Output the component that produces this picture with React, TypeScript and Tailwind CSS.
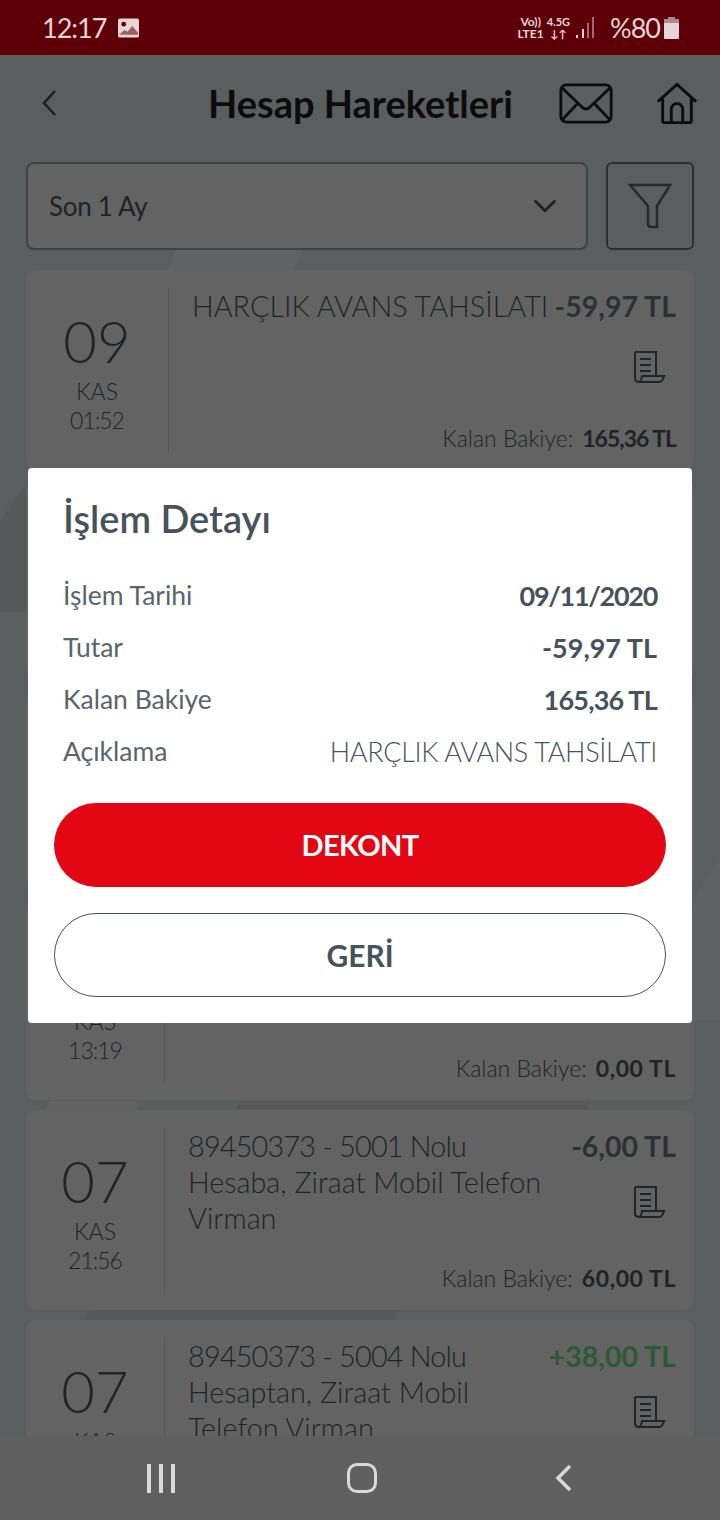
import { ChevronDown } from 'lucide-react';

const font = 'font-["Lato","Open_Sans",sans-serif]';

function ReceiptIcon() {
	return (
		<svg width="34" height="34" viewBox="0 0 34 34" fill="none" stroke="#1f2427" strokeWidth="2">
			<path d="M3 2h21v24" />
			<path d="M3 2v26c0 2.500 1.500 4 4 4h20c2.500 0 4-2 5-6H10c-.500 3-1 6-3 6" />
			<path d="M8 9h11M8 15h11M8 21h11" />
		</svg>
	);
}

type Row = {
	day: string;
	time: string;
	lines: string[];
	amount: string;
	balance: string;
	green?: boolean;
	wide?: boolean;
};

const rows: Row[] = [
	{ day: '09', time: '01:52', lines: ['HARÇLIK AVANS TAHSİLATI'], amount: '-59,97 TL', balance: '165,36 TL', wide: true },
	{ day: '08', time: '13:19', lines: [''], amount: '', balance: '0,00 TL' },
	{ day: '08', time: '13:19', lines: [''], amount: '', balance: '0,00 TL' },
	{ day: '08', time: '13:19', lines: [''], amount: '', balance: '0,00 TL' },
	{ day: '07', time: '21:56', lines: ['89450373 - 5001 Nolu', 'Hesaba, Ziraat Mobil Telefon', 'Virman'], amount: '-6,00 TL', balance: '60,00 TL' },
	{ day: '07', time: '21:56', lines: ['89450373 - 5004 Nolu', 'Hesaptan, Ziraat Mobil', 'Telefon Virman'], amount: '+38,00 TL', balance: '22,00 TL', green: true },
];

function Card({ row }: { row: Row }) {
	return (
		<div className="flex h-[200px] shrink-0 rounded-[10px] bg-[#636363] pl-[6px] pr-[18px] py-[18px]">
			<div
				className={`flex flex-col items-center justify-center border-r border-[#555758] pt-[6px] pr-[6px] text-[#1f2326] ${
					row.wide ? 'w-[137px]' : 'w-[133px]'
				}`}
			>
				<span className="text-[58px] leading-[60px] font-light">{row.day}</span>
				<span className="mt-[6px] text-[23px] leading-[29px] font-light">KAS</span>
				<span className="text-[23px] leading-[29px] font-light tracking-[-1px]">{row.time}</span>
			</div>
			<div className="flex min-w-0 flex-1 flex-col pl-[23px]">
				<div className="flex flex-1 justify-between">
					<div className="text-[28.800px] leading-[36px] font-light text-[#1f2326]">
						{row.lines.map((line, i) => (
							<div key={i} className={`whitespace-nowrap ${i === 0 && row.lines.length > 1 ? 'tracking-[-0.8px]' : ''}`}>
								{line}
							</div>
						))}
					</div>
					<div className="flex flex-col items-end">
						<span className={`text-[28.500px] leading-[36px] font-bold whitespace-nowrap ${row.green ? 'text-[#2b5a34]' : 'text-[#2c3134]'}`}>
							{row.amount}
						</span>
						<div className={`mr-[10px] ${row.wide ? 'mt-[26px]' : 'mt-[21px]'}`}>
							<ReceiptIcon />
						</div>
					</div>
				</div>
				<div className="flex justify-end gap-[9px] text-[23px] leading-[28px] text-[#1f2326]">
					<span className="font-light">Kalan Bakiye:</span>
					<span className={`font-bold ${row.wide ? 'tracking-[-1px]' : 'tracking-[0.6px]'}`}>{row.balance}</span>
				</div>
			</div>
		</div>
	);
}

function DetailRow({ label, value, valueClass }: { label: string; value: string; valueClass: string }) {
	return (
		<div className="flex h-[52px] items-center justify-between text-[27px] text-[#47535a]">
			<span className="text-[26.500px] font-normal text-[#5a656b]">{label}</span>
			<span className={valueClass}>{value}</span>
		</div>
	);
}

export default function App() {
	return (
		<div className={`relative isolate flex h-[1520px] w-[720px] flex-col overflow-hidden bg-[#5b5e5f] ${font}`}>
			{/* faint diagonal shapes of the page background */}
			<svg className="absolute top-0 left-0 -z-10" width="720" height="1520" viewBox="0 0 720 1520">
				<polygon points="176,250 302,250 294,270 168,270" fill="#606364" />
				<polygon points="0,520 28,482 28,612 0,612" fill="#565859" />
				<polygon points="720,860 692,900 692,1020 720,1020" fill="#5f6162" />
				<polygon points="50,1101 140,1101 135,1110 45,1110" fill="#606263" />
				<polygon points="240,1101 590,1101 586,1110 236,1110" fill="#565859" />
				<polygon points="90,1310 400,1310 394,1320 84,1320" fill="#565859" />
			</svg>

			<div className="flex h-[55px] shrink-0 items-center justify-between bg-[#5e0008] pr-[41px] pl-[42px] text-[#e6d5d6]">
				<div className="flex items-center gap-[12px]">
					<span className="text-[27px] leading-none tracking-[-1px]">12:17</span>
					<svg width="21" height="20" viewBox="0 0 22 20">
						<rect width="22" height="20" rx="2" fill="#e6d5d6" />
						<circle cx="6" cy="6" r="2.500" fill="#5e0008" />
						<path d="M1 17l6-5 3 2 5-6 6 7v2H1z" fill="#5e0008" opacity="0.55" />
					</svg>
				</div>
				<div className="flex items-center">
					<div className="flex flex-col text-[12px] leading-[12px] font-bold">
						<span className="pl-[3px]">Vo))</span>
						<span>LTE1</span>
					</div>
					<div className="ml-[3px] flex flex-col items-center text-[11px] leading-[12px] font-bold">
						<span>4.5G</span>
						<span>↓↑</span>
					</div>
					<svg className="ml-[5px]" width="20" height="22" viewBox="0 0 20 22">
						<rect x="1" y="18" width="2" height="3" fill="#e6d5d6" />
						<rect x="7" y="12" width="2" height="9" fill="#e6d5d6" />
						<rect x="12" y="6" width="2" height="15" fill="#a06a6e" />
						<rect x="17" y="0" width="2" height="21" fill="#a06a6e" />
					</svg>
					<span className="ml-[15px] text-[27px] leading-none tracking-[-1px]">%80</span>
					<svg className="ml-[4px]" width="15" height="22" viewBox="0 0 15 22">
						<rect x="4" y="0" width="7" height="3" fill="#a98b8d" />
						<rect x="0" y="2" width="15" height="5" fill="#a98b8d" />
						<rect x="0" y="6" width="15" height="16" rx="1" fill="#e6d5d6" />
					</svg>
				</div>
			</div>

			<div className="flex flex-1 flex-col overflow-hidden">
				<div className="flex h-[107px] shrink-0 items-center pb-[11px]">
					<svg className="ml-[41px]" width="16" height="28" viewBox="0 0 16 28" fill="none" stroke="#1b1e20" strokeWidth="2.500">
						<path d="M14 2L3 14l11 12" />
					</svg>
					<h1 className="ml-[151px] text-[38px] leading-none font-bold whitespace-nowrap text-[#0b0c0d]">Hesap Hareketleri</h1>
					<svg className="ml-[44px] shrink-0" width="58" height="41" viewBox="0 0 58 44" fill="none" stroke="#0b0c0d" strokeWidth="3">
						<rect x="2" y="2" width="54" height="40" rx="6" />
						<path d="M3 5l22 21c2.500 2.500 5.500 2.500 8 0L55 5M3 40l17-18M55 40L38 22" />
					</svg>
					<svg className="ml-[41px] shrink-0" width="42" height="43" viewBox="0 0 44 44" fill="none" stroke="#0b0c0d" strokeWidth="3">
						<path d="M2 20L22 2l20 18" />
						<path d="M7 16v24a2 2 0 0 0 2 2h26a2 2 0 0 0 2-2V16" />
						<path d="M16 42V28a6 6 0 0 1 12 0v14" />
					</svg>
				</div>

				<div className="flex shrink-0 gap-[18px] px-[26px]">
					<div className="flex h-[88px] w-[562px] items-center justify-between rounded-[8px] border-2 border-[#3f4244] bg-[#636363] pr-[22px] pl-[21px]">
						<span className="text-[26px] leading-none tracking-[-0.3px] text-[#1f2326]">Son 1 Ay</span>
						<ChevronDown size={38} strokeWidth={1.800} color="#1f2326" />
					</div>
					<div className="flex h-[88px] w-[88px] items-center justify-center rounded-[6px] border-2 border-[#2c3032]">
						<svg width="44" height="46" viewBox="0 0 44 46" fill="none" stroke="#25292c" strokeWidth="2.500">
							<path d="M2 2h40L29 23v21h-6c-2 0-3-1-3-3V23z" />
						</svg>
					</div>
				</div>

				<div className="mt-[20px] flex flex-1 flex-col gap-[10px] overflow-hidden px-[26px]">
					{rows.map((row, i) => (
						<Card key={i} row={row} />
					))}
				</div>
			</div>

			<div className="flex h-[84px] shrink-0 items-center bg-[#5f5f5f] pl-[147px]">
				<div className="flex gap-[8px]">
					<div className="h-[29px] w-[4px] bg-[#d9d9d9]" />
					<div className="h-[29px] w-[4px] bg-[#d9d9d9]" />
					<div className="h-[29px] w-[4px] bg-[#d9d9d9]" />
				</div>
				<div className="ml-[172px] h-[30px] w-[30px] rounded-[10px] border-[3px] border-[#d9d9d9]" />
				<svg className="ml-[178px]" width="17" height="28" viewBox="0 0 17 28" fill="none" stroke="#d9d9d9" strokeWidth="3.500">
					<path d="M15 2L3 14l12 12" />
				</svg>
			</div>

			<div className="absolute top-[468px] left-[28px] w-[664px] rounded-[4px] bg-white px-[26px] pt-[26px] pb-[26px]">
				<h2 className="pl-[9px] text-[38px] leading-[48px] font-semibold text-[#47535a]">İşlem Detayı</h2>
				<div className="mt-[28px] pr-[9px] pl-[9px]">
					<DetailRow label="İşlem Tarihi" value="09/11/2020" valueClass="font-bold tracking-[-1.300px]" />
					<DetailRow label="Tutar" value="-59,97 TL" valueClass="font-bold" />
					<DetailRow label="Kalan Bakiye" value="165,36 TL" valueClass="font-bold tracking-[-0.800px]" />
					<DetailRow label="Açıklama" value="HARÇLIK AVANS TAHSİLATI" valueClass="font-light tracking-[-0.300px]" />
				</div>
				<button className="mt-[25px] flex h-[84px] w-full items-center justify-center rounded-full bg-[#e30613] text-[29px] font-bold tracking-[-0.600px] text-white">
					DEKONT
				</button>
				<button className="mt-[26px] flex h-[84px] w-full items-center justify-center rounded-full border border-[#47535a] bg-white text-[30px] font-bold text-[#47535a]">
					GERİ
				</button>
			</div>
		</div>
	);
}
